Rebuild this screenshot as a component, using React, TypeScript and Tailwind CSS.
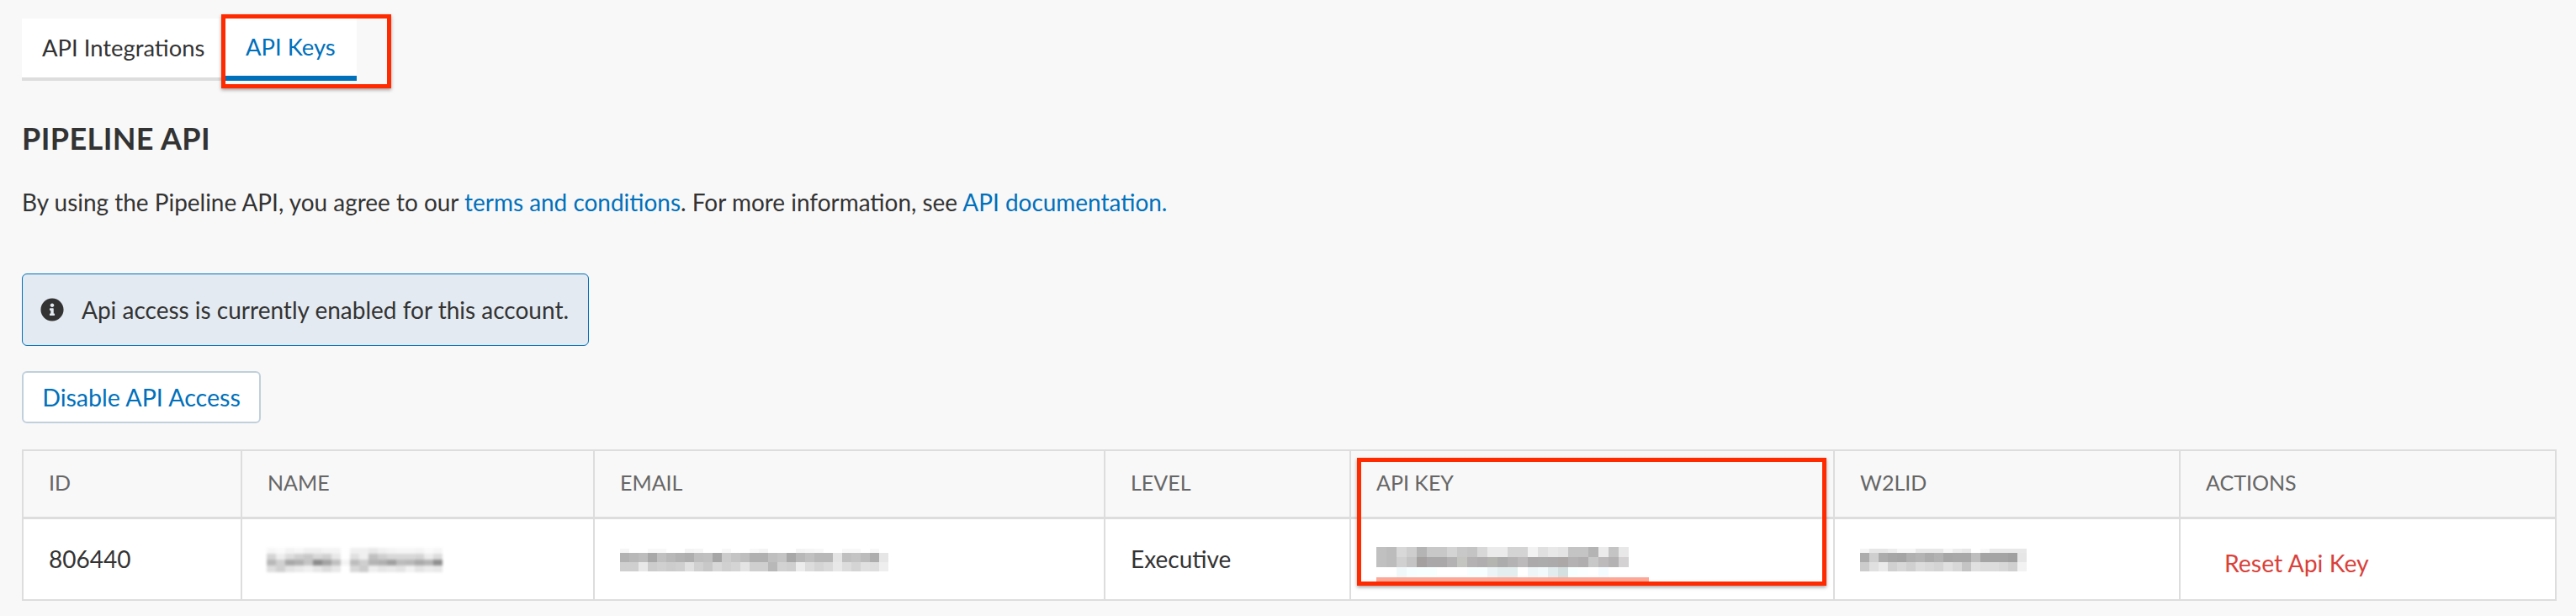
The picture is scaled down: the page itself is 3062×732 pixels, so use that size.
import { FaInfoCircle } from "react-icons/fa";

type MosaicRow = { h: number; cells: string[] };

// pixelated blur blocks, as they are in the screenshot
function Mosaic({ rows, cell, className }: { rows: MosaicRow[]; cell: number; className?: string }) {
    return (
        <div className={className}>
            {rows.map((r, i) => (
                <div key={i} className="flex" style={{ height: r.h }}>
                    {r.cells.map((c, j) => (
                        <div key={j} className="shrink-0" style={{ width: cell, background: "#" + c }}></div>
                    ))}
                </div>
            ))}
        </div>
    );
}

const nameRows: MosaicRow[] = [
    { h: 7, cells: "f6f6f6 fafafa f3f3f3 f6f6f6 f0f0f0 f0f0f0 f4f4f4 f4f4f4 fff f0f0f0 f0f0f0 e8e8e8 f0f0f0 f4f4f4 f6f6f6 f6f6f6 f4f4f4 fafafa f6f6f6".split(" ") },
    { h: 7, cells: "d4d4d4 eee dcdcdc d0d0d0 c8c8c8 d8d8d8 d0d0d0 e8e8e8 fff e0e0e0 f0f0f0 c0c0c0 cfcfcf d8d8d8 d8d8d8 d8d8d8 d4d4d4 ececec dcdcdc".split(" ") },
    { h: 7, cells: "b8b8b8 d0d0d0 a8a8a8 b0b0b0 c4c4c4 8c8c8c a4a4a4 c0c0c0 f4f4f4 bdbdbd cfcfcf b4b4b4 b0b0b0 a0a0a0 bcbcbc b8b8b8 aaaaaa b4b4b4 909090".split(" ") },
    { h: 8, cells: "dedede d0d0d0 e4e4e4 eaeaea f0f0f0 e6e6e6 dcdcdc e8e8e8 fff d8d8d8 cccccc eeeeee e6e6e6 eaeaea e4e4e4 f2f2f2 e4e4e4 ececec e8e8e8".split(" ") },
];

const emailRows: MosaicRow[] = [
    { h: 5, cells: "f6f6f6 fff fff f8f8f8 f8f8f8 fff fff f4f4f4 f6f6f6 fff fff f8f8f8 fff fff f8f8f8 f4f4f4 fff fff fff f4f4f4 f6f6f6 f8f8f8 fff fff f8f8f8 f8f8f8 fff f8f8f8 fff".split(" ") },
    { h: 11, cells: "b2b2b2 b8b8b8 bdbdbd a8a8a8 c0c0c0 b8b8b8 b2b2b2 aeaeae bebebe c0c0c0 a6a6a6 cccccc c4c4c4 bebebe b0b0b0 b0b0b0 bfbfbf c4c4c4 a8a8a8 b8b8b8 c0c0c0 b8b8b8 b8b8b8 e4e4e4 c0c0c0 c4c4c4 bcbcbc aeaeae e6e6e6".split(" ") },
    { h: 11, cells: "cfcfcf cfcfcf e8e8e8 cccccc d0d0d0 cccccc cfcfcf e0e0e0 d0d0d0 c8c8c8 d8d8d8 d0d0d0 d4d4d4 e4e4e4 cfcfcf cfcfcf b8b8b8 d2d2d2 cfcfcf ececec dcdcdc d4d4d4 dadada e8e8e8 dcdcdc d4d4d4 e0e0e0 dedede eeeeee".split(" ") },
];

const keyRows: MosaicRow[] = [
    { h: 12, cells: "c0c0c0 bcbcbc d8d8d8 cecece b4b4b4 c8c8c8 c8c8c8 d4d4d4 c8c8c8 c4c4c4 d8d8d8 ebebeb ebebeb d4d4d4 d4d4d4 f2f2f2 e0e0e0 e8e8e8 e4e4e4 c4c4c4 c4c4c4 b4b4b4 ebebeb c4c4c4 e8e8e8".split(" ") },
    { h: 12, cells: "c0c0c0 bcbcbc d0d0d0 c4c4c4 a4a0a0 aaa8a8 aaa8a8 b4b2b2 c4c4c0 b4b2b2 b0aeae b4b4b0 acacac b4b2b2 bcbaba acaaaa acacac acaaaa aca8a8 b4b2b2 b0aeae c8c8c8 bcbaba b4b2b2 d4d2d2".split(" ") },
    { h: 12, cells: "fff fff f0f8fa f6feff f8ffff f8ffff fff fff fff f8ffff f8ffff ecf4f6 e4eeee e4eeee fff eef6f8 f2fafc e2ecee d4e0e0 f8ffff fcffff fff f4fcff fff fff".split(" ") },
];

const w2Rows: MosaicRow[] = [
    { h: 5, cells: "f4f4f4 e6e6e6 e6e6e6 ececec f6f6f6 f6f6f6 e8e8e8 e8e8e8 e8e8e8 f6f6f6 ececec e8e8e8 fff f8f8f8 e8e8e8 e8e8e8 e8e8e8 e8e8e8".split(" ") },
    { h: 11, cells: "acacac cfcfcf acacac a6a6a6 a4a4a4 b0b0b0 b4b4b4 acacac b2b2b2 a6a6a6 a8a8a8 a8a8a8 bebebe a4a4a4 a4a4a4 a4a4a4 a0a0a0 e6e6e6".split(" ") },
    { h: 11, cells: "cccccc e0e0e0 eaeaea d0d0d0 d8d8d8 d0d0d0 dcdcdc d8d8d8 d4d4d4 e0e0e0 d8d8d8 c4c4c4 e0e0e0 dcdcdc dcdcdc d8d8d8 d0d0d0 f2f2f2".split(" ") },
];

const th = "border-l-2 border-b-[3px] border-[#dddddd] pl-[30px] pr-2 text-left font-normal text-[25px] text-[#666666] h-[80px] pb-[3px]";
const td = "border-l-2 border-[#dddddd] bg-white pl-[30px] pr-2 h-[98px] text-[28px] text-[#333333]";

export default function App() {
    return (
        <div className="relative w-[3062px] h-[732px] overflow-hidden bg-[#f8f8f8] text-[#333333] font-['Lato','Noto_Sans',sans-serif]">
            <div className="pl-[26px] pt-[22px]">
                <div className="flex h-[74px] text-[27.4px]">
                    <div className="w-[242px] pl-[24px] bg-white border-b-4 border-[#dddddd] flex items-center">API Integrations</div>
                    <div className="w-[156px] pl-[24px] bg-white border-b-[6px] border-[#0070bb] text-[#0070bb] flex items-center">API Keys</div>
                </div>

                <h1 className="mt-[48px] text-[36px] tracking-[0.4px] leading-[40px] font-bold">PIPELINE API</h1>
                <p className="mt-[36px] text-[27.95px] leading-[40px]">
                    By using the Pipeline API, you agree to our <a className="text-[#0070bb]">terms and conditions</a>. For more information, see <a className="text-[#0070bb]">API documentation.</a>
                </p>

                <div className="mt-[65px] w-[674px] h-[86px] flex items-center rounded-md border-[1.5px] border-[#0070bb] bg-[#e3eaf1] pl-[21px]">
                    <FaInfoCircle className="text-[28px] text-[#333333]" />
                    <span className="ml-[21px] text-[28px]">Api access is currently enabled for this account.</span>
                </div>

                <button className="mt-[30px] block w-[284px] h-[62px] rounded-md border-2 border-[#c0d0dc] bg-white text-[28.6px] text-[#0070bb]">Disable API Access</button>

                <table className="mt-[31px] w-[3013px] table-fixed border-collapse border-2 border-[#dddddd]">
                    <thead>
                        <tr>
                            <th className={th + " w-[260px]"}>ID</th>
                            <th className={th + " w-[419px]"}>NAME</th>
                            <th className={th + " w-[607px]"}>EMAIL</th>
                            <th className={th + " w-[292px]"}>LEVEL</th>
                            <th className={th + " w-[575px]"}>API KEY</th>
                            <th className={th + " w-[411px]"}>W2LID</th>
                            <th className={th}>ACTIONS</th>
                        </tr>
                    </thead>
                    <tbody>
                        <tr>
                            <td className={td}>806440</td>
                            <td className={td}><Mosaic rows={nameRows} cell={11} className="-ml-[1px] mt-[2px] blur-[1.5px]" /></td>
                            <td className={td}><Mosaic rows={emailRows} cell={11} className="mt-[3px]" /></td>
                            <td className={td}>Executive</td>
                            <td className={td}><Mosaic rows={keyRows} cell={12} className="mt-[16px]" /><div className="w-[324px] h-[8px] bg-[#fba898]"></div></td>
                            <td className={td}><Mosaic rows={w2Rows} cell={11} className="mt-[3px]" /></td>
                            <td className={td + " text-[#d9413a]"}><span className="relative top-[5px] ml-[22px] text-[28.4px]">Reset Api Key</span></td>
                        </tr>
                    </tbody>
                </table>
            </div>

            {/* red annotation boxes drawn over the screenshot */}
            <div className="absolute left-[263px] top-[17px] w-[202px] h-[88px] border-[5px] border-[#ff2a00] shadow-[0_2px_4px_rgba(0,0,0,0.35)]"></div>
            <div className="absolute left-[1613px] top-[544px] w-[558px] h-[152px] border-[5px] border-[#ff2a00] shadow-[0_2px_4px_rgba(0,0,0,0.35)]"></div>
        </div>
    );
}
